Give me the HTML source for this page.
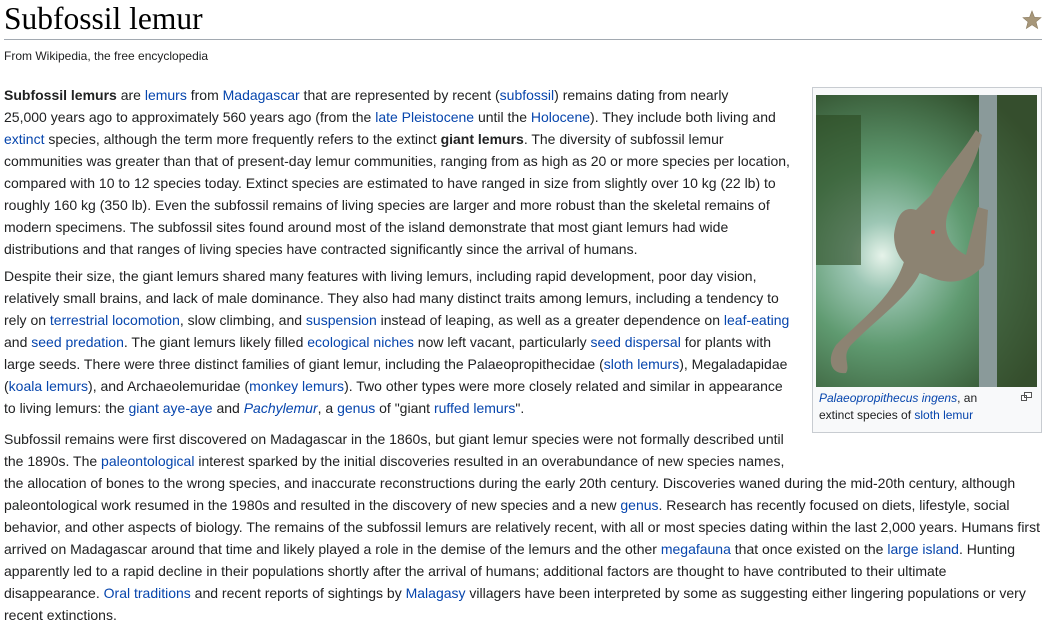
<!DOCTYPE html>
<html><head><meta charset="utf-8"><style>
body{margin:0;width:1051px;height:630px;overflow:hidden;background:#fff;font-family:"Liberation Sans",Arial,sans-serif;color:#202122;position:relative}
h1{position:absolute;left:4px;top:1px;margin:0;font-family:"Liberation Serif",Georgia,serif;font-weight:normal;font-size:31.5px;line-height:36px;color:#000}
.hr{position:absolute;left:4px;top:39px;width:1038px;height:1px;background:#a2a9b1}
.sub{position:absolute;left:4px;top:48px;font-size:12px;line-height:17px}
.l{position:absolute;left:4px;font-size:14px;line-height:22px;white-space:nowrap}
a{color:#0645ad;text-decoration:none}
.box{position:absolute;left:812px;top:87px;width:228px;height:344px;border:1px solid #c8ccd1;background:#f8f9fa}
.img{position:absolute;left:3px;top:7px;width:221px;height:292px;background:radial-gradient(ellipse at 30% 55%,#e6f3ea 0%,#9cc6b4 15%,#5f9a70 40%,#2e4a28 85%)}
.cap{position:absolute;left:6px;top:302px;font-size:12px;line-height:17px;color:#202122}
</style></head><body>
<h1>Subfossil lemur</h1>
<svg style="position:absolute;left:1022px;top:10px" width="20" height="20" viewBox="0 0 20 20"><polygon points="10,1 12.5,7.3 19,7.6 14,11.8 15.7,18.5 10,14.8 4.3,18.5 6,11.8 1,7.6 7.5,7.3" fill="#a7977a" stroke="#8a7a5e" stroke-width=".6"/></svg>
<div class="hr"></div>
<div class="sub">From Wikipedia, the free encyclopedia</div>

<div class="box"><div class="img">
<svg width="221" height="292" viewBox="0 0 221 292">
<rect x="0" y="20" width="45" height="150" fill="#2c4a22" opacity=".6"/>
<rect x="180" y="0" width="41" height="292" fill="#3a5230" opacity=".6"/>
<rect x="163" y="0" width="18" height="292" fill="#8a9a9a"/>
<path d="M160 35 C145 60 125 80 115 100 L100 115 C85 110 80 125 78 140 C78 160 90 175 110 180 C130 190 150 190 168 170 L172 115 L162 112 L150 160 C130 150 125 130 135 110 C145 90 160 70 166 40 Z" fill="#8c8372"/>
<path d="M90 160 C80 200 50 220 20 250 C10 265 15 280 30 278 C35 270 25 262 35 250 C65 220 95 200 105 175 Z" fill="#8c8372"/>
<circle cx="117" cy="137" r="2" fill="#e44"/>
</svg></div>
<div class="cap"><a><i>Palaeopropithecus ingens</i></a>, an<br>extinct species of <a>sloth lemur</a></div>
<svg style="position:absolute;left:208px;top:304px" width="11" height="9" viewBox="0 0 11 9"><path d="M3.5 .5h7v5h-7zM.5 3.5h5v5h-5z" fill="#fff" stroke="#555"/></svg>
</div>

<div class="l" style="top:84px"><b>Subfossil lemurs</b> are <a>lemurs</a> from <a>Madagascar</a> that are represented by recent (<a>subfossil</a>) remains dating from nearly</div>
<div class="l" style="top:106px">25,000 years ago to approximately 560 years ago (from the <a>late Pleistocene</a> until the <a>Holocene</a>). They include both living and</div>
<div class="l" style="top:128px"><a>extinct</a> species, although the term more frequently refers to the extinct <b>giant lemurs</b>. The diversity of subfossil lemur</div>
<div class="l" style="top:150px">communities was greater than that of present-day lemur communities, ranging from as high as 20 or more species per location,</div>
<div class="l" style="top:172px">compared with 10 to 12 species today. Extinct species are estimated to have ranged in size from slightly over 10 kg (22 lb) to</div>
<div class="l" style="top:194px">roughly 160 kg (350 lb). Even the subfossil remains of living species are larger and more robust than the skeletal remains of</div>
<div class="l" style="top:216px">modern specimens. The subfossil sites found around most of the island demonstrate that most giant lemurs had wide</div>
<div class="l" style="top:238px">distributions and that ranges of living species have contracted significantly since the arrival of humans.</div>

<div class="l" style="top:265px">Despite their size, the giant lemurs shared many features with living lemurs, including rapid development, poor day vision,</div>
<div class="l" style="top:287px">relatively small brains, and lack of male dominance. They also had many distinct traits among lemurs, including a tendency to</div>
<div class="l" style="top:309px">rely on <a>terrestrial locomotion</a>, slow climbing, and <a>suspension</a> instead of leaping, as well as a greater dependence on <a>leaf-eating</a></div>
<div class="l" style="top:331px">and <a>seed predation</a>. The giant lemurs likely filled <a>ecological niches</a> now left vacant, particularly <a>seed dispersal</a> for plants with</div>
<div class="l" style="top:353px">large seeds. There were three distinct families of giant lemur, including the Palaeopropithecidae (<a>sloth lemurs</a>), Megaladapidae</div>
<div class="l" style="top:375px">(<a>koala lemurs</a>), and Archaeolemuridae (<a>monkey lemurs</a>). Two other types were more closely related and similar in appearance</div>
<div class="l" style="top:397px">to living lemurs: the <a>giant aye-aye</a> and <a><i>Pachylemur</i></a>, a <a>genus</a> of "giant <a>ruffed lemurs</a>".</div>

<div class="l" style="top:428px">Subfossil remains were first discovered on Madagascar in the 1860s, but giant lemur species were not formally described until</div>
<div class="l" style="top:450px">the 1890s. The <a>paleontological</a> interest sparked by the initial discoveries resulted in an overabundance of new species names,</div>
<div class="l" style="top:472px">the allocation of bones to the wrong species, and inaccurate reconstructions during the early 20th century. Discoveries waned during the mid-20th century, although</div>
<div class="l" style="top:494px">paleontological work resumed in the 1980s and resulted in the discovery of new species and a new <a>genus</a>. Research has recently focused on diets, lifestyle, social</div>
<div class="l" style="top:516px">behavior, and other aspects of biology. The remains of the subfossil lemurs are relatively recent, with all or most species dating within the last 2,000 years. Humans first</div>
<div class="l" style="top:538px">arrived on Madagascar around that time and likely played a role in the demise of the lemurs and the other <a>megafauna</a> that once existed on the <a>large island</a>. Hunting</div>
<div class="l" style="top:560px">apparently led to a rapid decline in their populations shortly after the arrival of humans; additional factors are thought to have contributed to their ultimate</div>
<div class="l" style="top:582px">disappearance. <a>Oral traditions</a> and recent reports of sightings by <a>Malagasy</a> villagers have been interpreted by some as suggesting either lingering populations or very</div>
<div class="l" style="top:604px">recent extinctions.</div>
</body></html>
